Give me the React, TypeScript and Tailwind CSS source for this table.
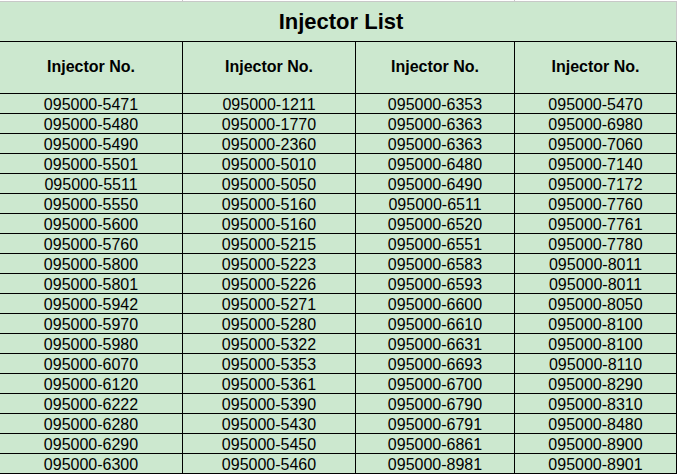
const columns: string[][] = [
  [
    "095000-5471", "095000-5480", "095000-5490", "095000-5501", "095000-5511",
    "095000-5550", "095000-5600", "095000-5760", "095000-5800", "095000-5801",
    "095000-5942", "095000-5970", "095000-5980", "095000-6070", "095000-6120",
    "095000-6222", "095000-6280", "095000-6290", "095000-6300",
  ],
  [
    "095000-1211", "095000-1770", "095000-2360", "095000-5010", "095000-5050",
    "095000-5160", "095000-5160", "095000-5215", "095000-5223", "095000-5226",
    "095000-5271", "095000-5280", "095000-5322", "095000-5353", "095000-5361",
    "095000-5390", "095000-5430", "095000-5450", "095000-5460",
  ],
  [
    "095000-6353", "095000-6363", "095000-6363", "095000-6480", "095000-6490",
    "095000-6511", "095000-6520", "095000-6551", "095000-6583", "095000-6593",
    "095000-6600", "095000-6610", "095000-6631", "095000-6693", "095000-6700",
    "095000-6790", "095000-6791", "095000-6861", "095000-8981",
  ],
  [
    "095000-5470", "095000-6980", "095000-7060", "095000-7140", "095000-7172",
    "095000-7760", "095000-7761", "095000-7780", "095000-8011", "095000-8011",
    "095000-8050", "095000-8100", "095000-8100", "095000-8110", "095000-8290",
    "095000-8310", "095000-8480", "095000-8900", "095000-8901",
  ],
]

const grid = "grid grid-cols-[183px_173px_159px_162px]"

export default function App() {
  const rows = columns[0].map((_, i) => columns.map((col) => col[i]))

  return (
    <div className="w-[677px] bg-white font-['Liberation_Sans',Arial,sans-serif] text-black">
      {/* gridline strip from the sheet above */}
      <div className={`${grid} h-[2px] border-b border-[#c8c8c8]`}>
        <div className="border-r border-[#c8c8c8]" />
        <div />
        <div className="border-r border-[#c8c8c8]" />
        <div />
      </div>

      <div className="bg-[#cce8cf]">
        <div className="flex h-[40px] items-center justify-center border-b border-r border-b-black border-r-[#c8c8c8] pl-[6px] text-[22px] font-bold">
          Injector List
        </div>

        <div className={`${grid} h-[52px] border-b border-black text-[16px] font-bold`}>
          {columns.map((_, i) => (
            <div key={i} className="flex items-center justify-center border-r border-black pb-[2px]">
              Injector No.
            </div>
          ))}
        </div>

        {rows.map((row, r) => (
          <div key={r} className={`${grid} h-[20px] border-b border-black text-[16px] leading-[19px]`}>
            {row.map((num, c) => (
              <div key={c} className="border-r border-black pt-[1px] text-center">
                {num}
              </div>
            ))}
          </div>
        ))}
      </div>
    </div>
  )
}
